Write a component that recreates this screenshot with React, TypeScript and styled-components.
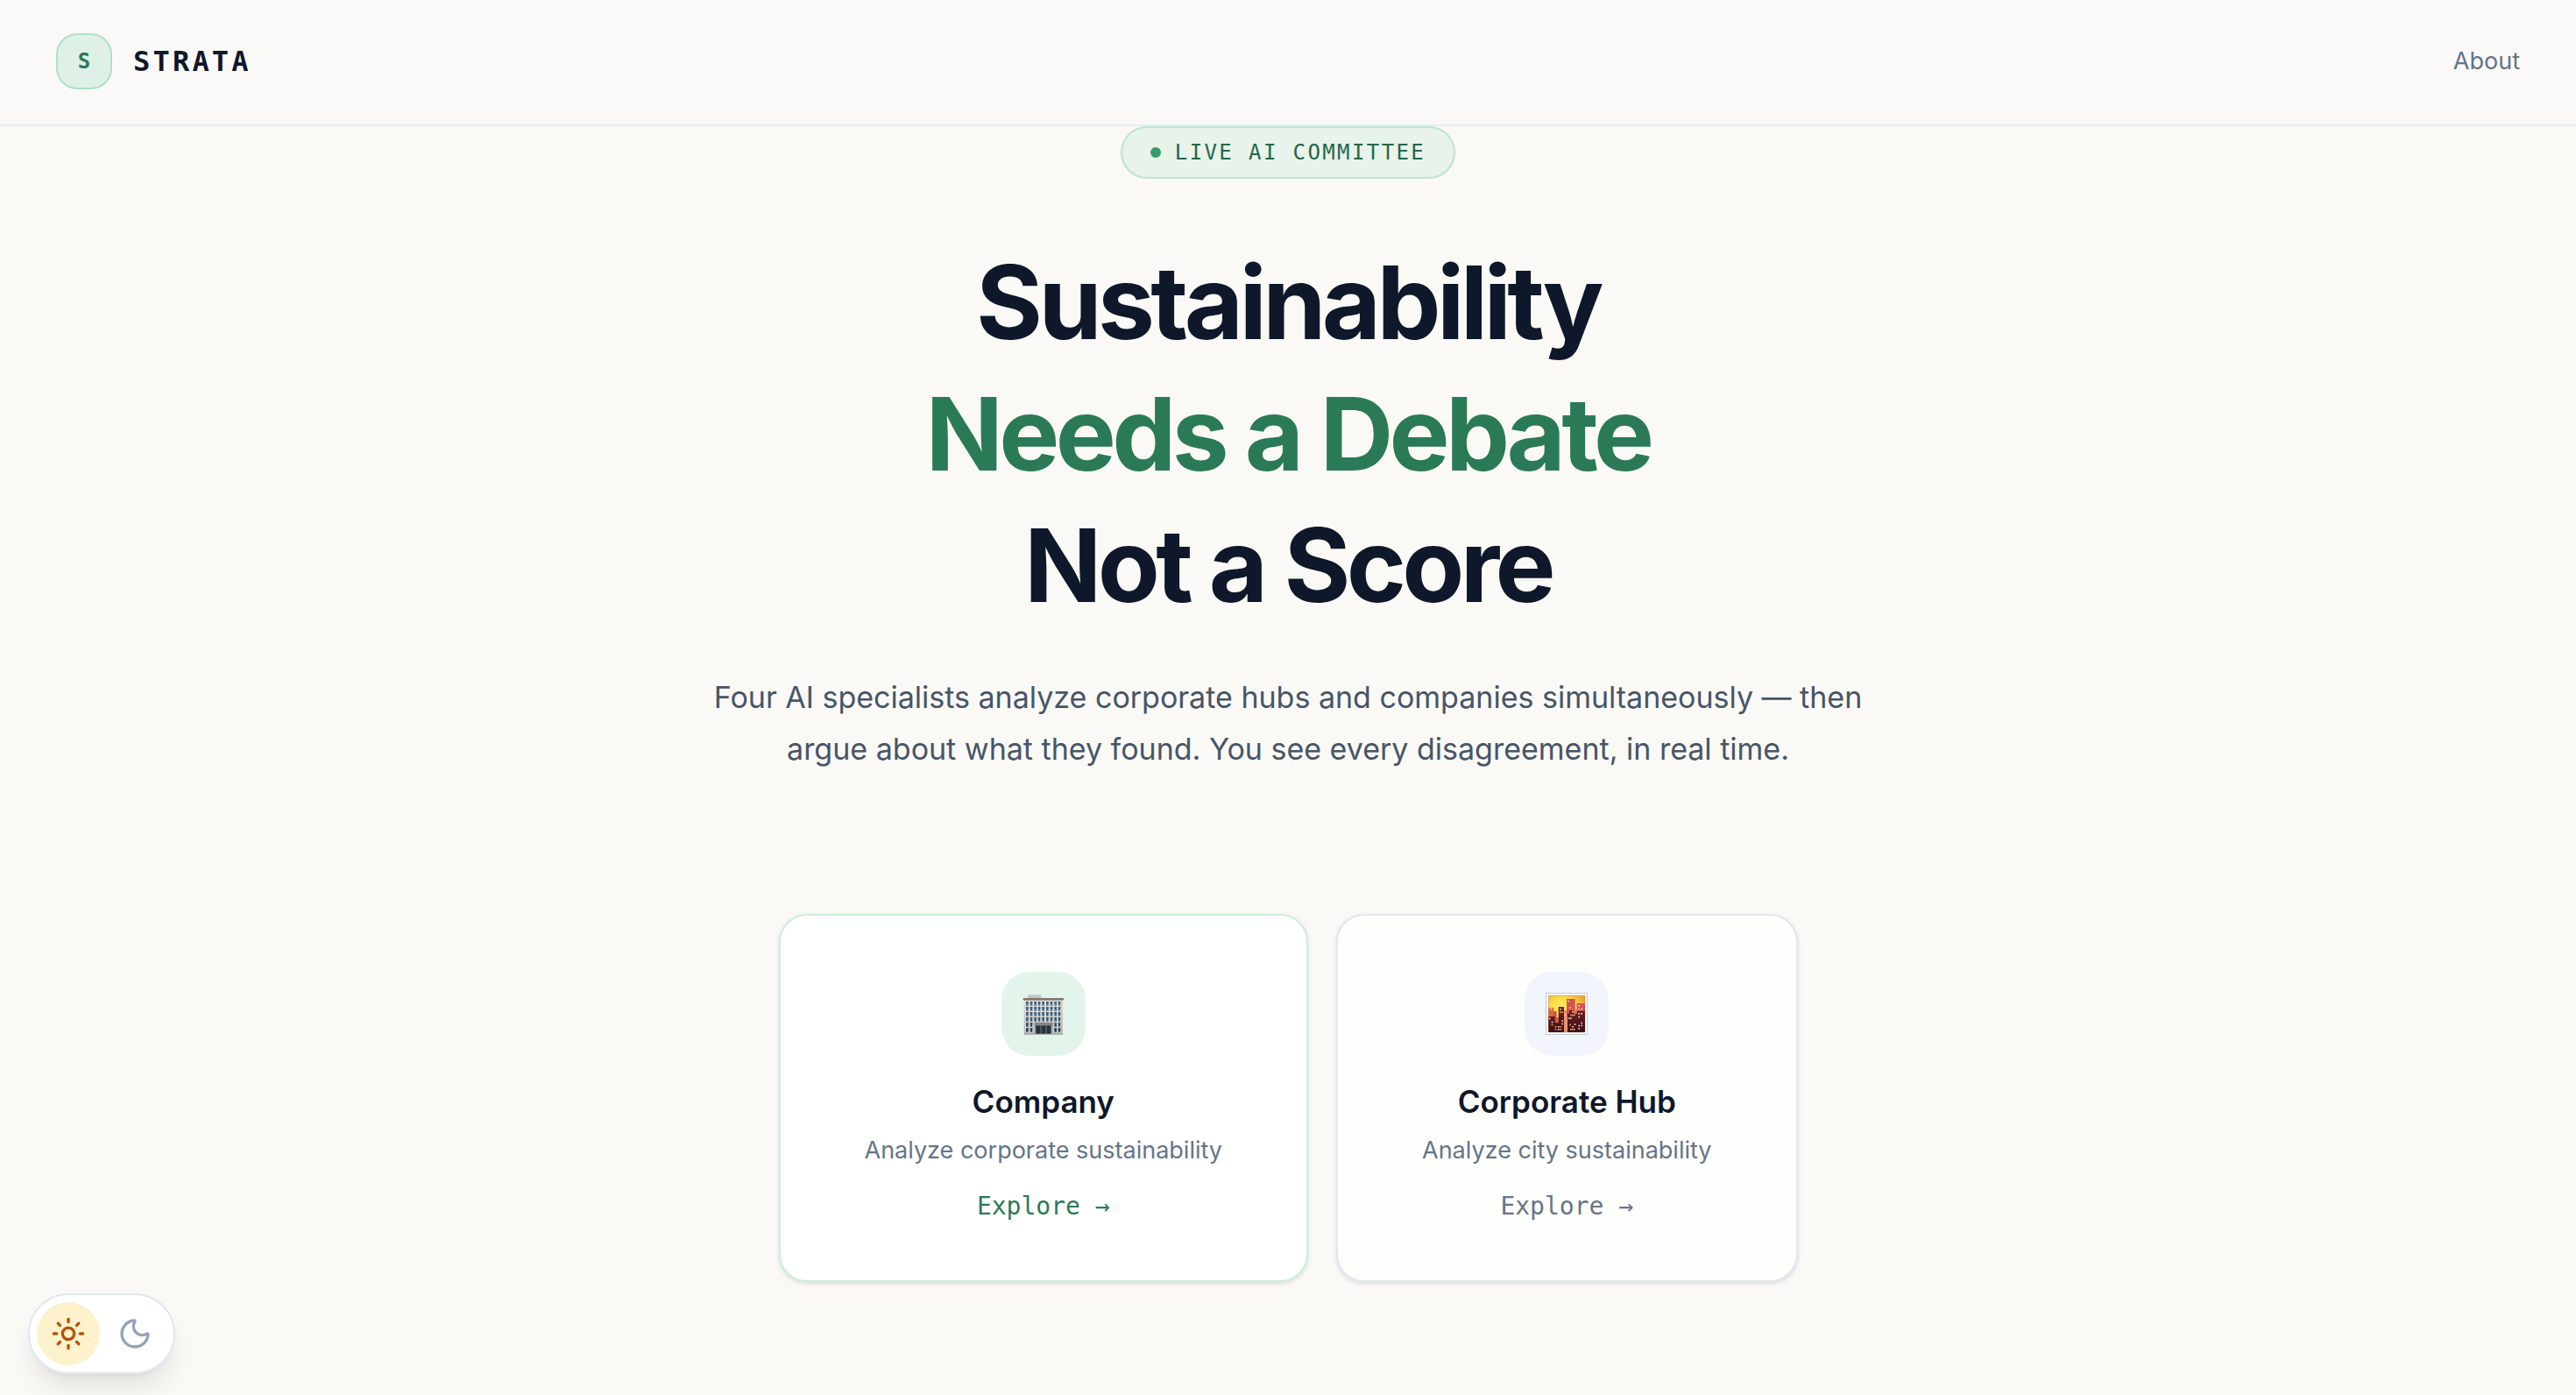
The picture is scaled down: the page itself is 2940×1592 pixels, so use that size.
import React, { useState } from "react";
import styled, { createGlobalStyle } from "styled-components";
import { Moon, Sun } from "lucide-react";

const sans = `Inter, "Liberation Sans", sans-serif`;
const mono = `"DejaVu Sans Mono", "Liberation Mono", monospace`;

const GlobalStyle = createGlobalStyle`
  *, *::before, *::after { box-sizing: border-box; }
  body {
    margin: 0;
    min-height: 100vh;
    background: #faf9f5;
    color: #0f172a;
    font-family: ${sans};
    -webkit-font-smoothing: antialiased;
  }
  h1, h2, p { margin: 0; }
`;

const Header = styled.header`
  display: flex;
  align-items: center;
  justify-content: space-between;
  padding: 38px 64px 40px;
  background: #fbf9f8;
  border-bottom: 2px solid #e8ebf4;
`;

const Brand = styled.a`
  display: flex;
  align-items: center;
  gap: 24px;
  color: #0f172a;
  font: 700 32px/48px ${mono};
  letter-spacing: 0.1em;
  text-decoration: none;
`;

const BrandMark = styled.span`
  display: flex;
  align-items: center;
  justify-content: center;
  width: 64px;
  height: 64px;
  border: 2px solid #aee0c7;
  border-radius: 24px;
  background: #dff1e6;
  color: #2a7a58;
  font-size: 24px;
  line-height: 32px;
  letter-spacing: 0;
`;

const NavLink = styled.a`
  color: #64748b;
  font-size: 27px;
  line-height: 40px;
  text-decoration: none;
`;

const Main = styled.main`
  display: flex;
  flex-direction: column;
  align-items: center;
  padding: 0 48px 128px;
  text-align: center;
`;

const Badge = styled.div`
  display: flex;
  align-items: center;
  gap: 16px;
  padding: 12px 32px;
  border: 2px solid #bce5d0;
  border-radius: 30px;
  background: #e8f3ea;
  color: #24664a;
  font: 400 24px/32px ${mono};
  letter-spacing: 0.1em;
`;

const Dot = styled.span`
  width: 12px;
  height: 12px;
  border-radius: 50%;
  background: #38996c;
`;

const Title = styled.h1`
  margin-top: 66px;
  font-size: 116px;
  font-weight: 700;
  line-height: 150px;
  letter-spacing: -0.04em;
`;

const TitleLine = styled.span<{ $accent?: boolean }>`
  display: block;
  color: ${(p) => (p.$accent ? "#2a7a58" : "#0f172a")};
`;

const Lead = styled.p`
  max-width: 1344px;
  margin-top: 46px;
  color: #475569;
  font-size: 34px;
  line-height: 59px;
`;

const Cards = styled.div`
  display: flex;
  flex-wrap: wrap;
  justify-content: center;
  gap: 32px;
  margin-top: 159px;
`;

const Card = styled.a<{ $accent?: boolean }>`
  display: flex;
  flex-direction: column;
  align-items: center;
  padding: 64px 96px;
  border: 2px solid ${(p) => (p.$accent ? "#cdeedd" : "#e2e8f0")};
  border-radius: 32px;
  background: ${(p) => (p.$accent ? "#ffffff" : "#fefefd")};
  box-shadow: 0 2px 6px rgba(15, 23, 42, 0.08), 0 2px 4px rgba(15, 23, 42, 0.05);
  color: ${(p) => (p.$accent ? "#2a7a58" : "#64748b")};
  text-decoration: none;
`;

const IconTile = styled.span<{ $accent?: boolean }>`
  display: flex;
  align-items: center;
  justify-content: center;
  width: 96px;
  height: 96px;
  margin-bottom: 24px;
  border-radius: 32px;
  background: ${(p) => (p.$accent ? "#e3f4eb" : "#f2f5fb")};
`;

const CardTitle = styled.h2`
  color: #0f172a;
  font-size: 35px;
  font-weight: 600;
  line-height: 56px;
`;

const CardText = styled.p`
  margin: 8px 0 24px;
  color: #64748b;
  font-size: 27px;
  line-height: 40px;
`;

const CardAction = styled.span`
  font: 400 28px/40px ${mono};
`;

const ThemeSwitch = styled.div`
  position: fixed;
  bottom: 24px;
  left: 32px;
  display: flex;
  gap: 4px;
  padding: 8px;
  border: 2px solid #e2e8f0;
  border-radius: 46px;
  background: #ffffff;
  box-shadow: 0 20px 30px -6px rgba(15, 23, 42, 0.1), 0 8px 12px -8px rgba(15, 23, 42, 0.1);
`;

const ThemeButton = styled.button<{ $active: boolean }>`
  display: flex;
  align-items: center;
  justify-content: center;
  width: 72px;
  height: 72px;
  padding: 0;
  border: 0;
  border-radius: 50%;
  background: ${(p) => (p.$active ? "#fdf2cb" : "transparent")};
  color: ${(p) => (p.$active ? "#b45309" : "#94a3b8")};
  cursor: pointer;
`;

const windowColumns = [12, 26, 40, 53, 67, 81, 95, 109, 122];
const windowRows = [31, 49, 67, 85, 103, 121];

function OfficeIcon() {
  return (
    <svg width="48" height="48" viewBox="0 0 144 144" aria-hidden="true">
      <defs>
        <linearGradient id="wall" x1="0" y1="0" x2="0" y2="1">
          <stop offset="0" stopColor="#ded8d2" />
          <stop offset="1" stopColor="#b9b7b6" />
        </linearGradient>
        <linearGradient id="glass" gradientUnits="userSpaceOnUse" x1="0" y1="30" x2="0" y2="136">
          <stop offset="0" stopColor="#4c7698" />
          <stop offset="0.6" stopColor="#41637f" />
          <stop offset="1" stopColor="#1c2c39" />
        </linearGradient>
      </defs>
      <rect x="18" y="7" width="46" height="12" fill="#c9c5c4" />
      <rect x="5" y="22" width="133" height="121" fill="url(#wall)" />
      <rect x="2" y="18" width="139" height="6" fill="#7d7570" />
      <rect x="4" y="24" width="135" height="3" fill="#a9a19b" />
      {windowRows.map((y, row) =>
        windowColumns.map((x, col) =>
          row > 3 && col > 1 && col < 7 ? null : (
            <g key={`${x}-${y}`}>
              <rect x={x - 2} y={y - 2} width="12" height="16" fill="#ebe7e2" />
              <rect x={x} y={y} width="8" height="13" fill="url(#glass)" />
              <rect x={x} y={y} width="8" height="4" fill="#2f4a60" />
            </g>
          ),
        ),
      )}
      <rect x="41" y="102" width="63" height="11" fill="#8b8582" />
      <rect x="44" y="111" width="56" height="30" fill="#67696b" />
      <rect x="46" y="113" width="15" height="28" fill="#22343f" />
      <rect x="65" y="113" width="14" height="28" fill="#22343f" />
      <rect x="83" y="113" width="13" height="28" fill="#22343f" />
      <rect x="5" y="140" width="133" height="3" fill="#a3a19f" />
    </svg>
  );
}

const whiteLights = [
  [16, 54], [48, 54], [12, 86], [20, 98], [55, 94], [42, 114], [76, 26], [82, 48],
  [112, 42], [112, 53], [121, 53], [112, 69], [121, 69], [112, 80], [121, 101],
  [112, 110], [121, 110], [112, 120], [65, 73], [91, 63], [78, 85], [84, 85],
  [98, 106], [91, 114], [55, 104], [42, 123],
];
const yellowLights = [
  [55, 64], [20, 107], [32, 114], [50, 114], [32, 123], [50, 123], [84, 74],
  [90, 74], [96, 74], [82, 107], [84, 123], [90, 123], [96, 123], [48, 64],
];

function CityIcon() {
  return (
    <svg width="48" height="48" viewBox="0 0 144 144" aria-hidden="true">
      <defs>
        <radialGradient id="dusk" cx="0.38" cy="0.4" r="0.75">
          <stop offset="0" stopColor="#fff05e" />
          <stop offset="0.45" stopColor="#fbdc4c" />
          <stop offset="1" stopColor="#ec9432" />
        </radialGradient>
        <linearGradient id="tower" x1="0" y1="0" x2="0" y2="1">
          <stop offset="0" stopColor="#702125" />
          <stop offset="1" stopColor="#3d0e16" />
        </linearGradient>
      </defs>
      <rect x="1" y="1" width="142" height="142" fill="#ffffff" stroke="#b5c0c4" strokeWidth="3" />
      <rect x="10" y="9" width="125" height="126" fill="url(#dusk)" />
      <path d="M10 52h17v12h10v20h8v51H10z" fill="#de6640" />
      <path d="M28 64h9v42h-9z" fill="#cf4c4b" />
      <path d="M63 60h12v75H63z" fill="#ef9170" />
      <path d="M72 21h29v60H72zM107 36h28v40h-28z" fill="#d55450" />
      <path d="M101 56h6v40h-6z" fill="#e67c4a" />
      <path
        d="M10 81h22v22h12V48h19v87H10zM75 71h6V61h15v10h11V62h28v73H75z"
        fill="url(#tower)"
      />
      {whiteLights.map(([x, y]) => (
        <rect key={`${x}-${y}`} x={x} y={y} width="5" height="5" fill="#f0cdd0" />
      ))}
      {yellowLights.map(([x, y]) => (
        <rect key={`${x}-${y}`} x={x} y={y} width="5" height="5" fill="#d5b13c" />
      ))}
      <rect x="10" y="9" width="125" height="126" fill="none" stroke="#7c3c28" strokeOpacity="0.4" strokeWidth="2" />
    </svg>
  );
}

export default function App() {
  const [theme, setTheme] = useState<"light" | "dark">("light");

  return (
    <>
      <GlobalStyle />
      <Header>
        <Brand href="#home">
          <BrandMark>S</BrandMark>
          STRATA
        </Brand>
        <nav>
          <NavLink href="#about">About</NavLink>
        </nav>
      </Header>
      <Main>
        <Badge>
          <Dot />
          LIVE AI COMMITTEE
        </Badge>
        <Title>
          <TitleLine>Sustainability</TitleLine>
          <TitleLine $accent>Needs a Debate</TitleLine>
          <TitleLine>Not a Score</TitleLine>
        </Title>
        <Lead>
          Four AI specialists analyze corporate hubs and companies simultaneously — then argue
          about what they found. You see every disagreement, in real time.
        </Lead>
        <Cards>
          <Card href="#company" $accent>
            <IconTile $accent>
              <OfficeIcon />
            </IconTile>
            <CardTitle>Company</CardTitle>
            <CardText>Analyze corporate sustainability</CardText>
            <CardAction>Explore →</CardAction>
          </Card>
          <Card href="#hub">
            <IconTile>
              <CityIcon />
            </IconTile>
            <CardTitle>Corporate Hub</CardTitle>
            <CardText>Analyze city sustainability</CardText>
            <CardAction>Explore →</CardAction>
          </Card>
        </Cards>
      </Main>
      <ThemeSwitch role="group" aria-label="Theme">
        <ThemeButton
          type="button"
          aria-label="Light theme"
          aria-pressed={theme === "light"}
          $active={theme === "light"}
          onClick={() => setTheme("light")}
        >
          <Sun size={40} />
        </ThemeButton>
        <ThemeButton
          type="button"
          aria-label="Dark theme"
          aria-pressed={theme === "dark"}
          $active={theme === "dark"}
          onClick={() => setTheme("dark")}
        >
          <Moon size={40} />
        </ThemeButton>
      </ThemeSwitch>
    </>
  );
}
